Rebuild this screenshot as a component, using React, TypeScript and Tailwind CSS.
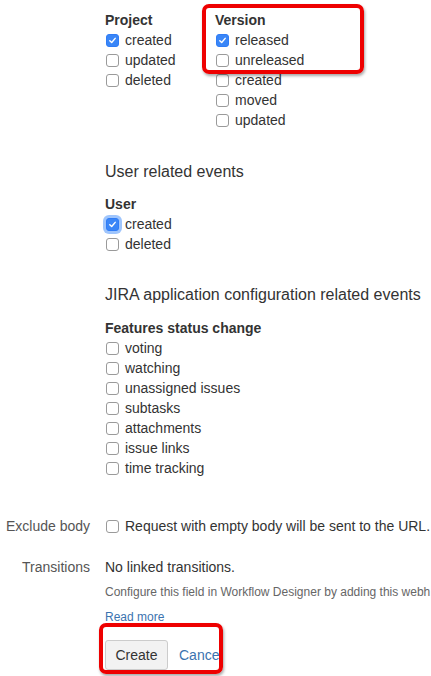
import React from "react";

function Box({ checked, focus }: { checked?: boolean; focus?: boolean }) {
  return (
    <span
      className={
        "relative flex h-[13px] w-[13px] shrink-0 items-center justify-center rounded-[3px] border " +
        (checked ? "border-[#2f7cf6] bg-[#3a86f7]" : "border-[#9a9a9a] bg-white") +
        (focus ? " shadow-[0_0_0_3px_rgba(80,150,250,0.55)]" : "")
      }
    >
      {checked && (
        <svg viewBox="0 0 10 10" className="h-[9px] w-[9px]">
          <path d="M2 5.2 L4.1 7.3 L8 2.6" fill="none" stroke="white" strokeWidth="1.6" strokeLinecap="round" strokeLinejoin="round" />
        </svg>
      )}
    </span>
  );
}

function Check({ label, checked, focus }: { label: string; checked?: boolean; focus?: boolean }) {
  return (
    <div className="flex h-5 items-center whitespace-nowrap">
      <span className="ml-[1px]"><Box checked={checked} focus={focus} /></span>
      <span className="ml-[6px]">{label}</span>
    </div>
  );
}

function Group({ title, items }: { title: string; items: { l: string; c?: boolean; f?: boolean }[] }) {
  return (
    <div>
      <div className="h-5 font-bold leading-5">{title}</div>
      {items.map((i) => (
        <Check key={i.l} label={i.l} checked={i.c} focus={i.f} />
      ))}
    </div>
  );
}

export default function App() {
  return (
    <div
      className="relative h-[676px] w-[431px] overflow-hidden bg-white text-[14px] leading-5 text-[#333]"
      style={{ fontFamily: '"Liberation Sans", Arial, sans-serif' }}
    >
      {/* event checkboxes */}
      <div className="pl-[105px] pt-[10px]">
        <div className="flex">
          <div className="w-[110px]">
            <Group title="Project" items={[{ l: "created", c: true }, { l: "updated" }, { l: "deleted" }]} />
          </div>
          <Group
            title="Version"
            items={[{ l: "released", c: true }, { l: "unreleased" }, { l: "created" }, { l: "moved" }, { l: "updated" }]}
          />
        </div>

        <h3 className="mt-[32px] h-5 text-[16px] leading-5 text-[#333]">User related events</h3>
        <div className="mt-3">
          <Group title="User" items={[{ l: "created", c: true, f: true }, { l: "deleted" }]} />
        </div>

        <h3 className="mt-[31px] h-5 whitespace-nowrap text-[16px] leading-5">JIRA application configuration related events</h3>
        <div className="mt-[13px]">
          <Group
            title="Features status change"
            items={[
              { l: "voting" },
              { l: "watching" },
              { l: "unassigned issues" },
              { l: "subtasks" },
              { l: "attachments" },
              { l: "issue links" },
              { l: "time tracking" },
            ]}
          />
        </div>
      </div>

      {/* fields */}
      <div className="mt-[38px] flex h-5 items-center whitespace-nowrap">
        <div className="w-[90px] shrink-0 text-right text-[#555]">Exclude body</div>
        <div className="ml-[15px] flex items-center">
          <span className="ml-[1px]"><Box /></span>
          <span className="ml-[6px]">Request with empty body will be sent to the URL.</span>
        </div>
      </div>

      <div className="mt-[21px] flex whitespace-nowrap">
        <div className="w-[90px] shrink-0 text-right leading-5 text-[#555]">Transitions</div>
        <div className="ml-[15px]">
          <div className="h-5">No linked transitions.</div>
          <div className="mt-[5px] h-[20px] text-[12px] leading-5 text-[#666]">
            Configure this field in Workflow Designer by adding this webh
          </div>
          <div className="mt-[5px] h-5 text-[12px] leading-5 text-[#3b73af]">Read more</div>
          <div className="mt-[13px] flex items-center">
            <button className="h-[30px] w-[63px] rounded-[3px] border border-[#ccc] bg-[#f2f2f2] text-[14px] text-[#333]">
              Create
            </button>
            <span className="ml-[11px] text-[#3b73af]">Cancel</span>
          </div>
        </div>
      </div>

      {/* highlight boxes */}
      <div className="absolute left-[202px] top-[4px] h-[70px] w-[162px] rounded-[7px] border-[4px] border-[#ee0000] shadow-[1px_2px_3px_rgba(0,0,0,0.35)]" />
      <div className="absolute left-[99px] top-[623px] h-[51px] w-[124px] rounded-[7px] border-[4px] border-[#ee0000] shadow-[1px_2px_3px_rgba(0,0,0,0.35)]" />
    </div>
  );
}
